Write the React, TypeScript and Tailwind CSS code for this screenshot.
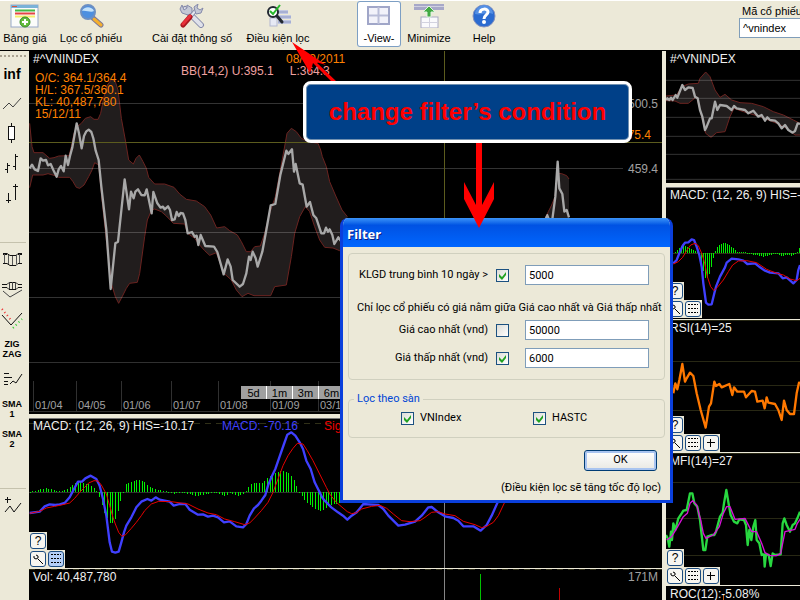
import React from "react";

/* Chart traces are stored at three units per pixel. */
const UNIT = 1 / 3;

const PRICE_LINE =
  "5,235 12,224 20,238 30,243 38,205 45,212 54,210 60,226 68,222 76,240 86,260 92,238 99,228 107,244 113,197 120,225 126,198 133,172 146,100 153,130 161,175 168,138 175,124 182,119 190,126 196,145 203,182 212,210 220,290 235,420 248,597 262,460 270,455 290,268 303,358 309,305 317,325 322,305 330,298 340,315 350,316 356,298 371,370 376,306 388,340 398,353 405,350 410,358 420,349 426,360 432,390 440,388 446,366 452,378 458,369 465,370 472,390 479,430 492,426 500,440 506,437 511,465 518,435 532,468 558,470 568,486 587,553 599,508 608,530 614,570 635,590 645,582 655,550 663,500 668,510 674,485 683,505 689,530 703,485 715,420 728,346 742,342 757,255 775,182 781,192 792,178 798,245 803,222 815,280 824,284 836,350 846,336 856,375 865,385 880,430 888,430 894,413 900,425 905,418 913,435 919,462 931,442 940,455";
const PRICE_UPPER =
  "5,100 12,170 18,188 45,188 65,205 78,203 92,198 123,197 130,170 138,130 147,110 160,100 172,85 188,80 198,88 210,88 218,70 228,20 238,-15 251,-32 262,-25 270,0 280,85 292,150 302,210 316,222 324,205 334,195 345,215 355,235 362,262 380,282 410,282 438,292 455,312 475,328 505,333 530,350 548,375 566,414 590,410 605,422 628,435 640,455 655,485 668,485 680,470 697,468 710,430 725,370 742,320 757,240 768,180 777,130 790,115 805,125 820,145 840,155 870,160 878,180 883,200 895,230 905,275 922,315 942,360 958,380";
const PRICE_LOWER =
  "5,293 14,255 45,255 60,251 85,258 92,262 125,262 135,275 145,292 155,295 168,285 182,260 192,240 200,218 212,225 222,330 235,450 250,580 262,620 272,640 285,615 295,595 305,580 328,577 335,550 350,440 358,390 370,362 380,357 400,365 415,378 436,400 470,402 479,430 500,445 515,465 530,482 545,496 565,488 580,530 590,552 610,570 625,600 642,620 660,610 678,617 728,617 740,590 775,585 790,500 800,430 815,380 832,350 845,365 860,410 875,450 890,472 915,474 935,482 958,484";
const MACD_BLUE =
  "5,432 35,428 50,412 65,406 82,408 95,406 110,402 125,385 138,360 150,338 162,338 172,328 188,320 205,330 215,350 225,390 235,440 245,520 252,548 262,551 272,548 280,520 288,490 295,470 310,445 325,415 340,398 358,390 370,395 383,385 395,392 410,395 425,398 437,410 455,405 472,405 485,422 510,437 525,436 540,443 555,440 570,445 588,460 605,457 625,472 645,475 655,465 665,440 678,418 690,408 700,395 712,378 720,350 730,325 742,300 755,262 768,225 778,197 790,190 802,200 815,220 825,240 835,275 848,300 860,340 875,370 882,385 890,395 910,415 930,430 945,440 958,452 971,440 986,430 1006,405 1021,406 1051,408 1066,420 1081,440 1111,470 1131,467 1161,458 1181,440 1201,415 1211,414 1231,430 1251,442 1276,447 1291,455 1306,472 1336,472 1358,485 1376,468 1391,440 1409,400";
const MACD_RED =
  "5,433 35,427 55,417 80,412 100,408 125,402 140,388 155,370 170,355 182,342 198,335 210,336 220,348 235,375 245,410 255,445 262,465 272,490 282,502 293,497 310,478 325,460 340,440 350,425 370,405 392,397 430,398 480,405 510,420 540,432 565,437 590,450 620,458 650,467 665,462 680,447 700,425 720,400 735,370 750,330 765,290 780,260 795,238 808,223 825,225 838,245 855,275 875,315 895,355 905,375 925,400 958,428 971,434 986,431 1001,420 1031,412 1056,409 1076,418 1096,435 1121,455 1146,458 1176,455 1191,445 1211,430 1231,428 1251,435 1281,440 1306,457 1341,467 1361,476 1376,472 1396,460 1411,440 1429,402";
const MINI_PRICE =
  "408,300 412,295 418,300 423,293 428,300 437,285 442,293 457,255 465,270 475,262 488,264 495,290 503,295 510,330 517,350 525,390 530,380 540,355 545,355 555,305 562,330 570,315 590,318 605,330 612,318 620,325 645,330 655,340 670,332 685,350 695,345 705,362 712,352 720,360 735,362 745,370 755,385 765,375 775,390 788,398 795,393 803,370 810,372";
const MINI_UPPER =
  "408,288 440,285 455,260 475,252 505,250 510,235 527,216 540,230 555,270 570,292 585,283 605,300 630,308 665,310 700,320 730,335 760,345 790,360 810,370";
const MINI_LOWER =
  "408,302 435,303 450,310 475,310 500,290 515,350 527,400 543,412 560,398 585,395 600,350 612,325 640,335 690,350 740,370 770,385 795,405 810,405";
const MINI_MACD_BLUE =
  "40,250 50,240 60,215 68,197 75,188 85,187 95,178 102,180 110,200 118,225 125,260 130,310 138,368 145,374 155,373 163,340 168,320 180,290 195,262 200,248 215,236 235,238 250,242 262,252 285,250 300,262 315,272 330,278 355,280 368,295 380,292 400,310 410,300 415,270 420,255";
const MINI_MACD_RED =
  "40,252 55,245 68,232 80,212 92,195 105,190 115,197 125,220 133,245 142,290 152,320 162,332 172,322 190,300 205,275 218,255 235,243 260,242 290,248 320,268 345,278 370,285 390,297 410,302 420,295";
const RSI_LINE =
  "40,100 46,70 52,88 58,60 67,12 75,65 80,55 90,38 100,48 110,100 122,150 137,203 147,140 153,130 163,65 168,78 178,72 185,82 208,72 217,105 222,82 232,95 252,95 258,112 275,93 285,95 292,125 308,122 314,145 320,112 325,128 345,132 355,150 365,180 372,122 380,150 390,162 402,162 410,100 417,68 422,70";
const MFI_GREEN =
  "18,525 23,535 28,560 33,515 36,540 40,490 46,510 55,475 65,460 70,452 80,450 90,400 97,400 103,430 112,440 120,480 130,570 136,570 142,530 155,525 163,525 168,515 180,470 188,458 192,430 199,390 206,432 212,465 222,485 232,490 238,478 252,480 258,495 263,555 268,510 274,540 280,500 286,480 290,540 298,550 305,585 312,583 314,620 318,583 326,585 332,618 338,580 345,585 362,583 368,490 373,475 380,495 390,515 398,495 405,490 412,475 420,455";
const MFI_MAGENTA =
  "20,540 35,530 50,505 70,470 82,460 90,430 98,422 110,435 122,480 130,520 138,535 160,525 178,500 190,460 200,440 210,440 225,478 255,475 275,515 290,515 305,550 315,578 330,587 350,587 362,580 375,515 405,508 412,490 420,478";

const HIST: [number, number][] = [
  [5, 0], [28, -5], [50, -12], [70, -8], [82, -3], [100, -3], [115, -8], [130, -20], [150, -35], [165, -27],
  [185, -22], [200, -8], [208, 0], [218, 30], [228, 60], [240, 85], [250, 98], [260, 85], [270, 55], [280, 15],
  [287, 0], [292, -22], [305, -30], [328, -38], [345, -33], [365, -15], [385, -8], [405, -4], [420, 0], [437, 5],
  [460, 2], [490, 8], [505, 12], [525, 8], [560, 2], [588, 12], [605, 4], [630, 12], [650, 4], [655, -5],
  [665, -22], [680, -28], [700, -25], [720, -45], [740, -58], [768, -64], [785, -55], [800, -30], [812, 0],
  [830, 25], [850, 45], [878, 57], [905, 40], [925, 35], [940, 30],
];
const MINI_HIST: [number, number][] = [
  [45, -5], [68, -25], [85, -18], [100, -10], [112, -5], [118, 20], [128, 50], [137, 80], [148, 60], [158, 20],
  [162, 0], [168, -15], [178, -25], [190, -33], [208, -25], [230, -5], [260, 0], [280, 4], [310, 10], [330, 4],
  [350, 2], [365, 10], [380, 4], [395, 8], [412, -2], [418, -20],
];

function sample(data: [number, number][], x: number) {
  const i = data.findIndex((p) => p[0] >= x);
  if (i <= 0) return data[0][1];
  const [x0, y0] = data[i - 1];
  const [x1, y1] = data[i];
  return y0 + ((y1 - y0) * (x - x0)) / (x1 - x0);
}

function Histogram({ data, base, step, width }: { data: [number, number][]; base: number; step: number; width: number }) {
  const bars: React.ReactElement[] = [];
  for (let x = data[0][0]; x <= data[data.length - 1][0]; x += step) {
    const v = sample(data, x);
    const h = Math.max(Math.abs(v), 3);
    bars.push(<rect key={x} x={x} y={v < 0 ? base - h : base} width={width} height={h} />);
  }
  return <g fill="#00f000" shapeRendering="crispEdges">{bars}</g>;
}

function Trace({ points, color, width = 6 }: { points: string; color: string; width?: number }) {
  return <polyline points={points} fill="none" stroke={color} strokeWidth={width} strokeLinejoin="round" />;
}

function Band({ upper, lower }: { upper: string; lower: string }) {
  return (
    <>
      <polygon points={upper + " " + lower.split(" ").reverse().join(" ")} fill="#211d1d" />
      <Trace points={upper} color="#6b2320" width={3} />
      <Trace points={lower} color="#6b2320" width={3} />
    </>
  );
}

function Rules({ ys, width, color }: { ys: number[]; width: number; color: string }) {
  return (
    <g fill={color}>
      {ys.map((y) => (
        <rect key={y} x="0" y={y} width={width} height="1" />
      ))}
    </g>
  );
}

function Panel({
  w, h, x = 0, y = 0, back, traces, front, children, className = "",
}: {
  w: number; h: number; x?: number; y?: number;
  back?: React.ReactNode; traces?: React.ReactNode; front?: React.ReactNode; children?: React.ReactNode; className?: string;
}) {
  return (
    <section className={"relative min-h-0 overflow-hidden bg-black text-[12px] leading-[12px] text-[#f0f0f0] " + className}>
      <svg className="absolute inset-0 h-full w-full" viewBox={`0 0 ${w} ${h}`} preserveAspectRatio="none" aria-hidden="true">
        {back}
        <g transform={`translate(${x} ${y}) scale(${UNIT})`}>{traces}</g>
        {front}
      </svg>
      {children}
    </section>
  );
}

const smallButton = "flex h-4 w-4 items-center justify-center rounded-[3px] border border-[#1c4c80] text-black";

function PanelTools({ plus = false, active = false, className = "bottom-0" }: { plus?: boolean; active?: boolean; className?: string }) {
  return (
    <div className={"absolute left-0 flex flex-col items-start " + className}>
      <div className="bg-[#ece9d8] p-px">
        <button aria-label="Help" className={smallButton + " bg-[#f7f6f1]"}>?</button>
      </div>
      <div className="flex gap-[2px] bg-[#ece9d8] p-px">
        <button aria-label="Settings" className={smallButton + " bg-[#f7f6f1]"}>
          <svg width="12" height="12" viewBox="0 0 12 12" fill="none" stroke="#000">
            <path d="M2 3v2l2 1 2-1V3L4 2M6 6l5 5" />
          </svg>
        </button>
        <button aria-label="Grid lines" className={smallButton + (active ? " bg-[#b5cff7]" : " bg-[#f7f6f1]")}>
          <svg width="12" height="12" viewBox="0 0 12 12" stroke="#000" strokeDasharray="2 1">
            <path d="M1 1.500h10M1 5.500h10M1 9.500h10" />
          </svg>
        </button>
        {plus && (
          <button aria-label="Add" className={smallButton + " bg-[#f7f6f1]"}>
            <svg width="10" height="10" viewBox="0 0 10 10" stroke="#000"><path d="M4.500 1v8M1 4.500h8" /></svg>
          </button>
        )}
      </div>
    </div>
  );
}

/* ---------- toolbar ---------- */

const icons = {
  table: (
    <svg width="30" height="24" viewBox="0 0 30 24">
      <rect x="1" y="1" width="27" height="22" fill="#fbfcfa" stroke="#98a9c8" />
      <rect x="1" y="1" width="27" height="3" fill="#7ab2d8" />
      <path d="M2 2.500h5" stroke="#d8553e" /><path d="M5 6.500h20" stroke="#45b845" strokeWidth="2" />
      <path d="M5 9.500h20" stroke="#e54545" strokeWidth="2" /><path d="M5 12.500h20" stroke="#f6ee6c" strokeWidth="2" />
      <circle cx="15" cy="18" r="5" fill="#63bd3c" stroke="#388c25" /><path d="M15 15v6M12 18h6" stroke="#fff" strokeWidth="2" />
    </svg>
  ),
  search: (
    <svg width="30" height="24" viewBox="0 0 30 24">
      <path d="m17 14 8 7" stroke="#7d7897" strokeWidth="5" strokeLinecap="round" />
      <path d="m18 15 7 6" stroke="#f5b02e" strokeWidth="3" strokeLinecap="round" />
      <circle cx="12" cy="8" r="7" fill="#4d8fe0" stroke="#6c8fc2" strokeWidth="2" />
      <path d="M6 7c2-5 10-5 12 0-3 2-8-1-12 0Z" fill="#c4e2fa" />
    </svg>
  ),
  tools: (
    <svg width="30" height="24" viewBox="0 0 30 24">
      <path d="m8 5 16 16" stroke="#8489aa" strokeWidth="6" strokeLinecap="round" />
      <path d="m8 5 16 16" stroke="#dfe1ea" strokeWidth="4" strokeLinecap="round" />
      <path d="m5 1 2 5 3-2V1l5 3v5l-4 2-6-2-2-4Z" fill="#c4c8d5" stroke="#8489aa" />
      <path d="m14 12 5-6" stroke="#8489aa" strokeWidth="4" />
      <path d="m14 12 5-6" stroke="#e4e6ed" strokeWidth="2" />
      <path d="m18 7-1-4 4-3-1 4 3 2 3-2-2 5-5 1Z" fill="#c4c8d5" stroke="#8489aa" />
      <path d="m6 21 7-8" stroke="#a81820" strokeWidth="5" strokeLinecap="round" />
      <path d="m6 20 7-8" stroke="#e8303a" strokeWidth="3" strokeLinecap="round" />
    </svg>
  ),
  filter: (
    <svg width="30" height="24" viewBox="0 0 30 24">
      <path d="M13 8h12M16 13h12M15 18h13" stroke="#c3c9e2" strokeWidth="4" />
      <path d="M13 8h12M16 13h12M15 18h13" stroke="#8b96c4" />
      <rect x="7" y="14" width="7" height="8" fill="#e7e9f4" stroke="#b3b8d0" />
      <circle cx="10" cy="8" r="5" fill="#fff" stroke="#222831" strokeWidth="2" />
      <path d="m14 12 5 6" stroke="#222831" strokeWidth="3" strokeLinecap="round" />
      <path d="m7 7 3 3 7-9" fill="none" stroke="#28b82c" strokeWidth="2" />
    </svg>
  ),
  view: (
    <svg width="24" height="20" viewBox="0 0 24 20">
      <rect x="1" y="1" width="21" height="17" fill="#f2f2fa" stroke="#a0a6c8" strokeWidth="2" />
      <path d="M11.500 1v17M2 9.500h19" stroke="#b9bdd8" strokeWidth="2" />
    </svg>
  ),
  minimize: (
    <svg width="30" height="24" viewBox="0 0 30 24">
      <path d="M0 0h30v6H19l-4-4-4 4H0Z" fill="#a7a8c8" /><path d="M0 2.500h30" stroke="#d0d0e1" />
      <rect x="7" y="13" width="17" height="11" fill="#fafafc" stroke="#a9a9c1" />
      <path d="M15.500 13v11M7 18.500h17" stroke="#d2d2df" />
      <path d="M15 2 9 8h4v5h4V8h4Z" fill="#43a943" stroke="#e0f4df" />
    </svg>
  ),
  help: (
    <svg width="24" height="24" viewBox="0 0 24 24">
      <circle cx="12" cy="12" r="11" fill="#2b6bd0" stroke="#8793bd" strokeWidth="1" />
      <path d="M3 10a9 9 0 0 1 18 0c-6-3-12 2-18 0Z" fill="#5590e4" />
      <path d="M8 9c0-5 8-5 8-1 0 3-4 3-4 7" fill="none" stroke="#fff" strokeWidth="3" />
      <circle cx="12" cy="18" r="2" fill="#fff" />
    </svg>
  ),
};

function ToolButton({ icon, label, className }: { icon: React.ReactNode; label: string; className: string }) {
  return (
    <button className={"flex h-[46px] shrink-0 flex-col items-center pt-px whitespace-nowrap " + className}>
      <span className="flex h-7 items-center">{icon}</span>
      <span className="leading-4">{label}</span>
    </button>
  );
}

function Toolbar() {
  return (
    <header className="flex h-[51px] shrink-0 overflow-hidden border-t border-b border-t-white border-b-black bg-[#ece9d8]">
      <ToolButton className="w-[50px]" icon={icons.table} label="Bảng giá" />
      <ToolButton className="mr-[10px] w-[82px]" icon={icons.search} label="Lọc cổ phiếu" />
      <ToolButton className="w-[100px]" icon={icons.tools} label="Cài đặt thông số" />
      <ToolButton className="w-[72px]" icon={icons.filter} label="Điều kiện lọc" />
      <ToolButton className="ml-[43px] w-[44px] rounded-[3px] bg-white shadow-[inset_0_0_0_1px_#7d9fc4]" icon={icons.view} label="-View-" />
      <ToolButton className="w-[56px]" icon={icons.minimize} label="Minimize" />
      <ToolButton className="w-[54px]" icon={icons.help} label="Help" />
      <div className="ml-auto w-[61px] overflow-hidden pt-1 whitespace-nowrap">
        <label htmlFor="symbol" className="block pl-[3px] leading-[13px]">Mã cổ phiếu</label>
        <input id="symbol" defaultValue="^vnindex" className="h-5 w-20 border border-[#7f9db9] bg-white px-[3px]" />
      </div>
    </header>
  );
}

/* ---------- side bar ---------- */

function Glyph({ children }: { children: React.ReactNode }) {
  return <svg width="22" height="24" viewBox="0 0 22 24" fill="none" stroke="#111" aria-hidden="true">{children}</svg>;
}

const pixelText = "text-[9px] leading-[10px] font-bold";

const chartTools: { name: string; view: React.ReactNode }[] = [
  { name: "Info", view: <b className="text-[14px]">inf</b> },
  { name: "Line", view: <Glyph><path d="m2 17 6-6 4 4 8-9" stroke="#444" /></Glyph> },
  { name: "Candle", view: <Glyph><path d="M10.500 1v20" /><rect x="7.500" y="4.500" width="6" height="13" fill="#fff" /></Glyph> },
  { name: "Bars", view: <Glyph><path d="M6.500 11v10M4 17.500h2M7 13.500h2M14.500 2v16M12 14.500h2M15 4.500h2" /></Glyph> },
  { name: "High low", view: <Glyph><path d="M7.500 11v10M5 18.500h5M14.500 2v16M12 4.500h5" /></Glyph> },
];
const indicatorTools: { name: string; view: React.ReactNode }[] = [
  {
    name: "Bands",
    view: (
      <Glyph>
        <path d="M2 6.500h4l3 2h6l2-2h4M2 16.500h4l3 2h6l2-2h4M2 7.500h4M17 7.500h4" />
        <path d="M3.500 7v9M7.500 8v9M11.500 9v9M15.500 8v9M18.500 7v9" stroke="#555" />
      </Glyph>
    ),
  },
  {
    name: "Envelope",
    view: <Glyph><path d="M1 7.500h5l2-2h7l2 2h4M1 10.500h5l2 2h7l2-2h4" /><path d="M8.500 5v7M11.500 5v7M14.500 5v7M2 14l7 6 12-7" stroke="#444" /></Glyph>,
  },
  { name: "Parabolic", view: <Glyph><path d="m1 8 9 10L21 6" /><path d="m1 2 9 11" stroke="#e33" strokeDasharray="1 3" strokeWidth="2" /><path d="m12 21 9-9" stroke="#3c3" strokeDasharray="1 3" strokeWidth="2" /></Glyph> },
  { name: "Zig zag", view: <span className={pixelText}>ZIG<br />ZAG</span> },
  { name: "Trend", view: <Glyph><path d="M3 6.500h5M3 10.500h8M3 14.500h4M3 17.500h4M9 17l3-3 3 2 6-9" /></Glyph> },
  { name: "SMA one", view: <span className={pixelText}>SMA<br />1</span> },
  { name: "SMA two", view: <span className={pixelText}>SMA<br />2</span> },
];

function ToolList({ items }: { items: { name: string; view: React.ReactNode }[] }) {
  return (
    <div className="flex flex-col">
      {items.map((t) => (
        <button key={t.name} aria-label={t.name} className="flex h-[30px] w-6 items-center justify-center text-center text-black">{t.view}</button>
      ))}
    </div>
  );
}

function SideBar() {
  return (
    <nav aria-label="Chart tools" className="flex w-[29px] shrink-0 flex-col overflow-hidden bg-[#ece9d8] pt-1">
      <div className="mb-[2px] w-[26px] border-t-2 border-dotted border-[#aaa392]" />
      <ToolList items={chartTools} />
      <hr className="mt-[33px] mb-px w-[26px] border-[#c5c2ad]" />
      <ToolList items={indicatorTools} />
      <hr className="mt-[34px] mb-[2px] w-[26px] border-[#c5c2ad]" />
      <ToolList items={[{ name: "Add line", view: <Glyph><path d="M6.500 3v6M4 5.500h6M4 18l5-6 4 6 7-9" /></Glyph> }]} />
    </nav>
  );
}

/* ---------- charts ---------- */

const dates: [string, string][] = [
  ["01/04", "w-[43px]"], ["04/05", "w-[45px]"], ["01/06", "w-[50px]"], ["01/07", "w-[47px]"],
  ["01/08", "w-[52px]"], ["01/09", "w-[48px]"], ["03/10", "w-[48px]"],
];

function MainCharts() {
  return (
    <main className="grid min-w-0 flex-1 grid-rows-[367fr_151fr_31fr] bg-[#ece9d8]">
      <Panel
        w={633} h={363} x={-1} y={39} className="mb-1"
        back={<Rules ys={[311, 360]} width={594} color="#303030" />}
        traces={
          <>
            <Band upper={PRICE_UPPER} lower={PRICE_LOWER} />
            <g transform="translate(1116 120)">
              <path d="M435 265 445 245 455 225 465 200 472 130 485 131 500 137 507 147V265Z" fill="#211d1d" />
              <Trace points="435,265 445,245 455,225 465,200 472,130 485,131 500,137 507,147" color="#6b2320" width={3} />
            </g>
          </>
        }
        front={
          <>
            <g opacity="0.2"><Rules ys={[52, 117, 181, 246]} width={594} color="#ffffff" /></g>
            <path d="M0 91.500h633M415.500 0v363" stroke="#5c5c1e" />
            <g transform={`translate(-1 39) scale(${UNIT})`}>
              <Trace points={PRICE_LINE} color="#a8a8a8" width={7} />
            </g>
            <g transform={`translate(371 79) scale(${UNIT})`}>
              <Trace points="436,268 442,255 447,268" color="#a8a8a8" />
              <Trace points="457,268 466,200 473,95 478,175 487,192 493,245 500,240 507,262" color="#a8a8a8" width={7} />
            </g>
          </>
        }
      >
        <h2 className="absolute top-[2px] left-1">#^VNINDEX</h2>
        <div className="absolute top-[21px] left-[6px] text-[#ff8000]">
          <p>O/C: 364.1/364.4</p><p>H/L: 367.5/360.1</p><p>KL: 40,487,780</p><p>15/12/11</p>
        </div>
        <p className="absolute top-[2px] left-[257px] text-[#ff8000]">08/09/2011</p>
        <p className="absolute top-[14px] left-[152px] flex gap-4 text-[#f0a0a0]"><span>BB(14,2) U:395.1</span><span>L:364.3</span></p>
        <p className="absolute top-[47px] right-1 text-[#a0a0a0]">500.5</p>
        <p className="absolute top-[78px] right-[11px] text-[#ff8000]">475.4</p>
        <p className="absolute top-[112px] right-1 text-[#a0a0a0]">459.4</p>
        <div className="absolute bottom-[2px] left-1 flex h-[31px] items-end text-[11px] text-[#a0a0a0]">
          {dates.map(([d, w]) => (
            <span key={d} className={"flex h-full items-end border-l border-[#303030] pb-px pl-px " + w}>{d}</span>
          ))}
        </div>
        <div className="absolute bottom-[15px] left-[212px] flex gap-px bg-white text-[11px]">
          {["5d", "1m", "3m", "6m"].map((r) => (
            <button key={r} className="h-[13px] w-[25px] bg-[#a0a0a0] text-black">{r}</button>
          ))}
        </div>
      </Panel>

      <Panel
        w={633} h={149} x={-1} y={-50} className="mb-px border-t border-[#777]"
        back={
          <>
            <path d="M0 4.500h633" stroke="#303018" strokeDasharray="6 5" />
            <path d="M0 73.500h633" stroke="#303030" />
            <path d="M415.500 0v149" stroke="#858585" />
          </>
        }
        traces={
          <>
            <Histogram data={HIST} base={369} step={8} width={3} />
            <Trace points={MACD_BLUE} color="#4040ff" width={7} />
            <Trace points={MACD_RED} color="#e80000" width={3} />
          </>
        }
      >
        <h2 className="absolute top-px left-1">MACD: (12, 26, 9) HIS=-10.17</h2>
        <p className="absolute top-px left-[193px] text-[#4040ff]">MACD: -70.16</p>
        <p className="absolute top-px left-[295px] text-[#f00000]">Sig</p>
        <PanelTools active />
      </Panel>

      <Panel
        w={633} h={31}
        back={
          <>
            <path d="M0 .5h633" stroke="#303018" strokeDasharray="6 5" />
            <path d="M415.500 0v31" stroke="#858585" />
            <path d="M451.500 5v26" stroke="#00c000" /><path d="M530.500 19v12" stroke="#c00000" />
          </>
        }
      >
        <h2 className="absolute top-[2px] left-1">Vol: 40,487,780</h2>
        <p className="absolute top-[2px] right-1 text-[#a0a0a0]">171M</p>
      </Panel>
    </main>
  );
}

function SideCharts() {
  return (
    <aside className="grid w-[138px] shrink-0 grid-rows-[136fr_133fr_133fr_133fr_14fr] bg-[#ece9d8] pl-1">
      <Panel
        w={134} h={132} x={-136} y={-51} className="mb-1"
        traces={
          <>
            <Band upper={MINI_UPPER} lower={MINI_LOWER} />
            <path d="M408 241H810M408 295H810M408 352H810M408 409H810M408 463H810M408 538H810" stroke="#fff" strokeOpacity="0.2" strokeWidth="3" />
            <Trace points={MINI_PRICE} color="#a8a8a8" width={7} />
          </>
        }
      >
        <h2 className="absolute top-[2px] left-1">#^VNINDEX</h2>
      </Panel>
      <Panel
        w={134} h={131} x={-6} y={-8} className="mb-px border-t border-[#777]"
        back={<Rules ys={[65]} width={134} color="#303018" />}
        traces={
          <>
            <Histogram data={MINI_HIST} base={220} step={6} width={4} />
            <Trace points={MINI_MACD_BLUE} color="#4040ff" width={7} />
            <Trace points={MINI_MACD_RED} color="#e80000" width={3} />
          </>
        }
      >
        <h2 className="absolute top-px left-1 whitespace-nowrap">MACD: (12, 26, 9) HIS=-10.17</h2>
        <PanelTools className="bottom-px" />
      </Panel>
      <Panel
        w={134} h={132} x={-6} y={40} className="mb-px"
        back={<Rules ys={[0, 41, 65, 90]} width={134} color="#282814" />}
        traces={<Trace points={RSI_LINE} color="#ff7800" width={7} />}
      >
        <h2 className="absolute top-[2px] left-1">RSI(14)=25</h2>
        <PanelTools plus />
      </Panel>
      <Panel
        w={134} h={132} x={-6} y={-93} className="mb-px"
        back={<Rules ys={[0, 29, 65, 102]} width={134} color="#282814" />}
        traces={
          <>
            <Trace points={MFI_GREEN} color="#28d840" width={7} />
            <Trace points={MFI_MAGENTA} color="#d810d8" width={4} />
          </>
        }
      >
        <h2 className="absolute top-[2px] left-1">MFI(14)=27</h2>
        <PanelTools plus />
      </Panel>
      <Panel w={134} h={14} back={<path d="M57.500 9v5" stroke="#c05a10" />}>
        <h2 className="absolute top-[2px] left-1 whitespace-nowrap">ROC(12):-5.08%</h2>
      </Panel>
    </aside>
  );
}

/* ---------- dialog ---------- */

function CheckBox({ id, checked = false }: { id: string; checked?: boolean }) {
  return (
    <span className="relative flex h-[13px] w-[13px] shrink-0">
      <input
        id={id} type="checkbox" defaultChecked={checked}
        className="peer h-[13px] w-[13px] appearance-none border border-[#1c5180] bg-linear-to-br from-[#dcdcd7] to-white"
      />
      <svg className="pointer-events-none absolute inset-0 hidden peer-checked:block" width="13" height="13" viewBox="0 0 13 13">
        <path d="m3 5 3 3 4-5v3l-4 5-3-3Z" fill="#21a121" />
      </svg>
    </span>
  );
}

function LimitRow({ id, label, value, checked }: { id: string; label: string; value: string; checked?: boolean }) {
  return (
    <div className="flex h-5 items-center">
      <label htmlFor={id} className="flex-1 text-right">{label}</label>
      <span className="mr-4 ml-2"><CheckBox id={id} checked={checked} /></span>
      <input aria-label={label} defaultValue={value} className="h-5 w-[124px] border border-[#7f9db9] bg-white px-[3px]" />
    </div>
  );
}

function FilterDialog() {
  return (
    <div
      role="dialog" aria-labelledby="filter-title"
      className="absolute top-[218px] left-[340px] h-[285px] w-[333px] overflow-hidden rounded-t-[8px] border-3 border-t-0 border-[#0a3fdc] bg-[#ece9d8] font-['Roboto',sans-serif]"
    >
      <h1
        id="filter-title"
        className="-mx-[3px] flex h-[29px] items-center bg-linear-to-b from-[#3b93f8] via-[#0052e3] via-25% to-[#0066ff] px-[7px] pt-1 font-['Noto_Sans',sans-serif] text-[13px] font-bold text-white [text-shadow:1px_1px_#0a1f80]"
      >
        Filter
      </h1>
      <form className="flex flex-col px-[5px] pt-[6px]" onSubmit={(e) => e.preventDefault()}>
        <fieldset className="h-[127px] min-w-0 rounded-[4px] border border-[#d0d0bf] pt-[11px] pr-[15px]">
          <LimitRow id="volume" label="KLGD trung bình 10 ngày >" value="5000" checked />
          <p className="mt-[15px] -mr-[15px] pl-2 leading-4 whitespace-nowrap">Chỉ lọc cổ phiếu có giá nằm giữa Giá cao nhất và Giá thấp nhất</p>
          <div className="mt-1 flex flex-col gap-2">
            <LimitRow id="high" label="Giá cao nhất (vnd)" value="50000" />
            <LimitRow id="low" label="Giá thấp nhất (vnd)" value="6000" checked />
          </div>
        </fieldset>
        <fieldset className="mt-[11px] h-[47px] rounded-[4px] border border-[#d0d0bf] pl-[52px]">
          <legend className="-ml-[47px] px-[3px] leading-4 text-[#0046d5]">Lọc theo sàn</legend>
          <div className="flex pt-[3px]">
            <div className="flex w-[132px] items-center gap-[6px]"><CheckBox id="vnindex" checked /><label htmlFor="vnindex">VNIndex</label></div>
            <div className="flex items-center gap-[6px]"><CheckBox id="hastc" checked /><label htmlFor="hastc">HASTC</label></div>
          </div>
        </fieldset>
        <button className="mt-3 mr-2 h-[21px] w-[73px] self-end rounded-[3px] border border-[#003c74] bg-linear-to-b from-white to-[#e9e8e2] shadow-[inset_0_0_0_2px_#a9c4f0]">OK</button>
        <p className="mt-[9px] mr-1 self-end leading-4">(Điều kiện lọc sẽ tăng tốc độ lọc)</p>
      </form>
    </div>
  );
}

function Annotation() {
  return (
    <>
      <svg className="pointer-events-none absolute top-0 left-0" width="640" height="240" viewBox="0 0 640 240" fill="#ff0000" aria-hidden="true">
        <path d="m292 42 34 23-10-3 20 19-3 2-20-20-3 10Z" />
        <path d="M476 140h6v65l12-23v17l-15 29-15-29v-17l12 23Z" />
      </svg>
      <div className="absolute top-[81px] left-[303px] flex h-[62px] w-[329px] items-center justify-center rounded-[8px] border-3 border-white bg-[#004088] text-[24px] font-bold whitespace-nowrap text-[#ff0000] shadow-[inset_0_0_0_1px_#7090b0]">
        change filter’s condition
      </div>
    </>
  );
}

export default function App() {
  return (
    <div className="relative flex h-screen flex-col overflow-hidden bg-[#ece9d8] font-['Liberation_Sans',Arial,sans-serif] text-[11px] text-black">
      <Toolbar />
      <div className="flex min-h-0 flex-1">
        <SideBar />
        <MainCharts />
        <SideCharts />
      </div>
      <FilterDialog />
      <Annotation />
    </div>
  );
}
